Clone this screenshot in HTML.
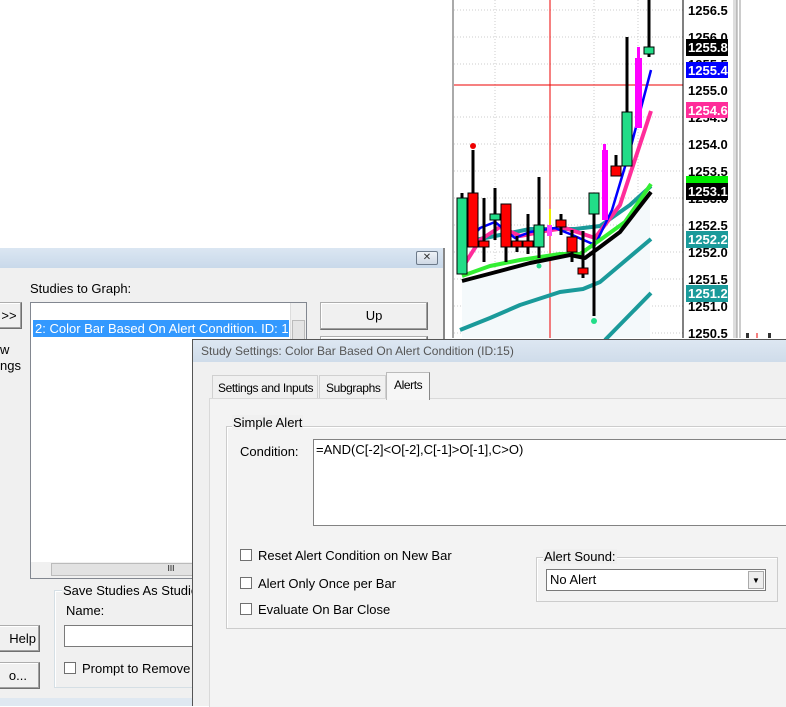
<!DOCTYPE html>
<html><head><meta charset="utf-8">
<style>
*{box-sizing:border-box;margin:0;padding:0}
body{width:786px;height:706px;overflow:hidden;background:#fff;font-family:"Liberation Sans",sans-serif;font-size:12px;color:#000;position:relative}
.abs{position:absolute;white-space:nowrap}
.btn{position:absolute;background:#f0f0f0;border:1px solid #adadad;border-right-color:#707070;border-bottom-color:#707070;box-shadow:inset -1px -1px 0 #a0a0a0,inset 1px 1px 0 #fff;text-align:center;font-size:13px}
.cb{position:absolute;width:12px;height:12px;border:1px solid #707070;background:#fff}
.grp{position:absolute;border:1px solid #d5dfe5;box-shadow:inset 1px 1px 0 #fff}
.grpl{position:absolute;background:#f0f0f0;padding:0 1px;font-size:13px;white-space:nowrap}
.t13{font-size:13px}
.tab{font-size:12px;letter-spacing:-0.4px}
</style></head><body>

<svg class="abs" style="left:440px;top:0" width="346" height="345" viewBox="440 0 346 345">
<rect x="440" y="0" width="346" height="345" fill="#fff"/>
<line x1="453" y1="0" x2="453" y2="338" stroke="#555" stroke-width="1"/>
<g stroke="#ccc" stroke-dasharray="1,2" stroke-width="1">
<line x1="454" y1="10" x2="683" y2="10"/><line x1="454" y1="37" x2="683" y2="37"/><line x1="454" y1="64" x2="683" y2="64"/>
<line x1="454" y1="117" x2="683" y2="117"/><line x1="454" y1="144" x2="683" y2="144"/><line x1="454" y1="171" x2="683" y2="171"/>
<line x1="454" y1="198" x2="683" y2="198"/><line x1="454" y1="225" x2="683" y2="225"/><line x1="454" y1="252" x2="683" y2="252"/>
<line x1="454" y1="279" x2="683" y2="279"/><line x1="454" y1="306" x2="683" y2="306"/><line x1="454" y1="333" x2="683" y2="333"/>
<line x1="495" y1="0" x2="495" y2="338"/><line x1="594" y1="0" x2="594" y2="338"/><line x1="638" y1="0" x2="638" y2="338"/>
</g>
<path d="M462 280 L500 270 L530 262 L570 255 L585 258 L600 247 L620 232 L650 196 L650 338 L462 338Z" fill="#f4f9fb"/>
<line x1="550" y1="0" x2="550" y2="338" stroke="#e00" stroke-width="1"/>
<line x1="454" y1="85" x2="683" y2="85" stroke="#e00" stroke-width="1"/>
<g fill="none" stroke-linejoin="round">
<path d="M460 330 L490 318 L520 305 L560 292 L583 289 L600 282 L651 239" stroke="#1a9a9a" stroke-width="4"/>
<path d="M605 340 L651 293" stroke="#1a9a9a" stroke-width="4"/>
<path d="M470 241 L500 235 L530 229 L575 229 L600 226 L630 205 L651 186" stroke="#1a9a9a" stroke-width="4"/>
<path d="M466 262 L480 240 L500 227 L520 236 L545 231 L565 228 L595 238 L620 205 L651 111" stroke="#ff2d9a" stroke-width="4"/>
<path d="M462 248 L480 228 L495 222 L515 238 L530 232 L555 228 L570 234 L595 245 L612 210 L630 150 L651 70" stroke="#0000ff" stroke-width="2.5"/>
<path d="M462 276 L490 266 L520 260 L560 254 L580 254 L600 240 L625 222 L651 184" stroke="#33ee33" stroke-width="4"/>
<path d="M462 281 L500 271 L530 263 L570 255 L585 258 L600 247 L620 232 L651 192" stroke="#000" stroke-width="4"/>
</g>
<g stroke="#000" stroke-width="3">
<line x1="462" y1="193" x2="462" y2="274"/><line x1="473" y1="150" x2="473" y2="247"/><line x1="484" y1="198" x2="484" y2="262"/>
<line x1="495" y1="188" x2="495" y2="240"/><line x1="506" y1="204" x2="506" y2="262"/><line x1="517" y1="236" x2="517" y2="252"/>
<line x1="528" y1="214" x2="528" y2="254"/><line x1="539" y1="177" x2="539" y2="258"/><line x1="561" y1="214" x2="561" y2="235"/>
<line x1="572" y1="230" x2="572" y2="262"/><line x1="583" y1="231" x2="583" y2="278"/><line x1="594" y1="193" x2="594" y2="316"/>
<line x1="616" y1="155" x2="616" y2="176"/><line x1="627" y1="37" x2="627" y2="166"/><line x1="649" y1="0" x2="649" y2="57"/>
</g>
<g stroke="#000" stroke-width="1">
<rect x="457" y="198" width="10" height="76" fill="#22dd88"/><rect x="468" y="193" width="10" height="54" fill="#f00"/>
<rect x="479" y="241" width="10" height="6" fill="#f00"/><rect x="490" y="214" width="10" height="6" fill="#22dd88"/>
<rect x="501" y="204" width="10" height="43" fill="#f00"/><rect x="512" y="241" width="10" height="6" fill="#f00"/>
<rect x="523" y="241" width="10" height="6" fill="#f00"/><rect x="534" y="225" width="10" height="22" fill="#22dd88"/>
<rect x="556" y="220" width="10" height="7" fill="#f00"/><rect x="567" y="237" width="10" height="15" fill="#f00"/>
<rect x="578" y="268" width="10" height="6" fill="#f00"/><rect x="589" y="193" width="10" height="21" fill="#22dd88"/>
<rect x="611" y="166" width="10" height="10" fill="#f00"/><rect x="622" y="112" width="10" height="54" fill="#22dd88"/>
<rect x="644" y="47" width="10" height="7" fill="#22dd88"/>
</g>
<line x1="550" y1="209" x2="550" y2="236" stroke="#ee0" stroke-width="2"/>
<rect x="547" y="225" width="5" height="11" fill="#ff40ff"/>
<rect x="602" y="150" width="6" height="70" fill="#ff00ff"/><rect x="603" y="144" width="3" height="8" fill="#ff00ff"/>
<rect x="635" y="58" width="7" height="70" fill="#ff00ff"/><rect x="637" y="47" width="3" height="12" fill="#ff00ff"/>
<circle cx="473" cy="146" r="3" fill="#e00"/><circle cx="539" cy="266" r="2.5" fill="#22dd88"/><circle cx="594" cy="321" r="3" fill="#22dd88"/>
<line x1="683" y1="0" x2="683" y2="338" stroke="#000"/>
<g font-family="Liberation Sans" font-weight="bold" font-size="13">
<text x="688" y="15">1256.5</text><text x="688" y="42">1256.0</text><text x="688" y="69">1255.5</text>
<text x="688" y="95">1255.0</text><text x="688" y="122">1254.5</text><text x="688" y="149">1254.0</text>
<text x="688" y="176">1253.5</text><text x="688" y="203">1253.0</text><text x="688" y="230">1252.5</text>
<text x="688" y="257">1252.0</text><text x="688" y="284">1251.5</text><text x="688" y="311">1251.0</text>
<text x="688" y="338">1250.5</text>
<rect x="686" y="176" width="42" height="8" fill="#00ee00"/>
<rect x="686" y="39" width="42" height="17" fill="#000"/><text x="688" y="52" fill="#fff">1255.8</text>
<rect x="686" y="62" width="42" height="16" fill="#0000ff"/><text x="688" y="75" fill="#fff">1255.4</text>
<rect x="686" y="102" width="42" height="16" fill="#ff2d9a"/><text x="688" y="115" fill="#fff">1254.6</text>
<rect x="686" y="183" width="42" height="17" fill="#000"/><text x="688" y="196" fill="#fff">1253.1</text>
<rect x="686" y="231" width="42" height="17" fill="#1a9a9a"/><text x="688" y="244" fill="#fff">1252.2</text>
<rect x="686" y="285" width="42" height="17" fill="#1a9a9a"/><text x="688" y="298" fill="#fff">1251.2</text>
</g>
<rect x="733" y="0" width="4" height="338" fill="#ddd"/><line x1="737" y1="0" x2="737" y2="338" stroke="#999"/>
<line x1="740" y1="0" x2="740" y2="338" stroke="#999"/>
<rect x="746" y="333" width="3" height="5" fill="#333"/><rect x="768" y="333" width="3" height="5" fill="#333"/><line x1="757" y1="333" x2="757" y2="338" stroke="#e00"/>
</svg>

<div class="abs" style="left:0;top:248px;width:445px;height:458px;background:#f0f0f0;border-right:2px solid #888">
  <div class="abs" style="left:0;top:0;width:443px;height:20px;background:linear-gradient(#dbe6f2,#c9d9ea)"></div>
  <div class="abs" style="left:416px;top:3px;width:22px;height:14px;border:1px solid #6d7a8a;border-radius:2px;background:linear-gradient(#eef2f7,#cfd9e5);font-size:10px;text-align:center;line-height:12px;color:#333">✕</div>
  <div class="abs t13" style="left:30px;top:33px">Studies to Graph:</div>
  <div class="btn" style="left:-4px;top:54px;width:26px;height:27px;line-height:25px">&gt;&gt;</div>
  <div class="abs t13" style="left:0;top:94px">w</div>
  <div class="abs t13" style="left:0;top:110px">ngs</div>
  <div class="abs" style="left:30px;top:54px;width:277px;height:277px;background:#fff;border:1px solid #828790">
    <div class="abs" style="left:2px;top:17px;width:256px;height:17px;background:#3399ff;color:#fff;font-size:13px;line-height:17px;padding-left:2px;overflow:hidden">2: Color Bar Based On Alert Condition. ID: 15</div>
    <div class="abs" style="right:0;top:0;width:16px;height:260px;background:#f0f0f0;border-left:1px solid #ddd"><div style="margin:17px 1px;height:22px;background:#e4e4e4;border:1px solid #bbb"></div></div>
    <div class="abs" style="left:0;bottom:0;width:275px;height:16px;background:#f0f0f0"><div class="abs" style="left:20px;top:1px;width:240px;height:13px;background:#e2e2e2;border:1px solid #bbb;font-size:8px;text-align:center">III</div></div>
  </div>
  <div class="btn" style="left:320px;top:54px;width:108px;height:28px;line-height:26px">Up</div>
  <div class="btn" style="left:320px;top:88px;width:108px;height:10px"></div>
  <div class="grp" style="left:54px;top:342px;width:150px;height:98px"></div>
  <div class="grpl" style="left:62px;top:335px">Save Studies As Studies</div>
  <div class="abs t13" style="left:66px;top:355px">Name:</div>
  <div class="abs" style="left:64px;top:377px;width:140px;height:22px;background:#fff;border:1px solid #7a7a7a"></div>
  <div class="cb" style="left:64px;top:414px"></div>
  <div class="abs t13" style="left:82px;top:413px">Prompt to Remove</div>
  <div class="btn" style="left:-4px;top:377px;width:44px;height:27px;line-height:25px;text-align:right;padding-right:3px">Help</div>
  <div class="btn" style="left:-4px;top:414px;width:44px;height:27px;line-height:25px;text-align:right;padding-right:12px">o...</div>
  <div class="abs" style="left:0;top:450px;width:443px;height:8px;background:#dfe8f1"></div>
</div>

<div class="abs" style="left:192px;top:339px;width:594px;height:367px;background:#f0f0f0;border-left:1px solid #555;border-top:1px solid #555">
  <div class="abs" style="left:0;top:0;width:594px;height:22px;background:linear-gradient(#dde7f2,#cfdcea)"></div>
  <div class="abs" style="left:8px;top:4px;color:#555;font-size:12px">Study Settings: Color Bar Based On Alert Condition (ID:15)</div>
  <div class="abs" style="left:16px;top:58px;width:578px;height:309px;border-left:1px solid #d9d9d9;border-top:1px solid #d9d9d9;background:#f3f3f3"></div>
  <div class="abs tab" style="left:19px;top:35px;width:106px;height:23px;border:1px solid #d0d0d0;border-bottom:none;padding:5px 0 0 5px;background:#f0f0f0">Settings and Inputs</div>
  <div class="abs tab" style="left:126px;top:35px;width:67px;height:23px;border:1px solid #d0d0d0;border-bottom:none;padding:5px 0 0 6px;background:#f0f0f0">Subgraphs</div>
  <div class="abs tab" style="left:193px;top:32px;width:44px;height:28px;border:1px solid #bbb;border-bottom:none;padding:5px 0 0 7px;background:#f6f6f6;border-right-color:#888">Alerts</div>
  <div class="grp" style="left:33px;top:86px;width:570px;height:203px;border-color:#ccc"></div>
  <div class="grpl" style="left:39px;top:75px">Simple Alert</div>
  <div class="abs t13" style="left:47px;top:104px">Condition:</div>
  <div class="abs" style="left:120px;top:99px;width:480px;height:87px;background:#fff;border:1px solid #828282;border-right:none;font-size:13px;padding:2px 2px">=AND(C[-2]&lt;O[-2],C[-1]&gt;O[-1],C&gt;O)</div>
  <div class="cb" style="left:47px;top:209px"></div><div class="abs t13" style="left:65px;top:208px">Reset Alert Condition on New Bar</div>
  <div class="cb" style="left:47px;top:237px"></div><div class="abs t13" style="left:65px;top:236px">Alert Only Once per Bar</div>
  <div class="cb" style="left:47px;top:263px"></div><div class="abs t13" style="left:65px;top:262px">Evaluate On Bar Close</div>
  <div class="grp" style="left:343px;top:217px;width:242px;height:45px;border-color:#ccc"></div>
  <div class="grpl" style="left:350px;top:209px">Alert Sound:</div>
  <div class="abs" style="left:353px;top:229px;width:220px;height:22px;background:#fff;border:1px solid #7a7a7a;font-size:13px;padding:2px 3px">No Alert
    <div class="abs" style="right:1px;top:1px;width:16px;height:18px;background:#eee;border:1px solid #aaa;font-size:8px;text-align:center;line-height:17px">▼</div></div>
</div>
</body></html>
